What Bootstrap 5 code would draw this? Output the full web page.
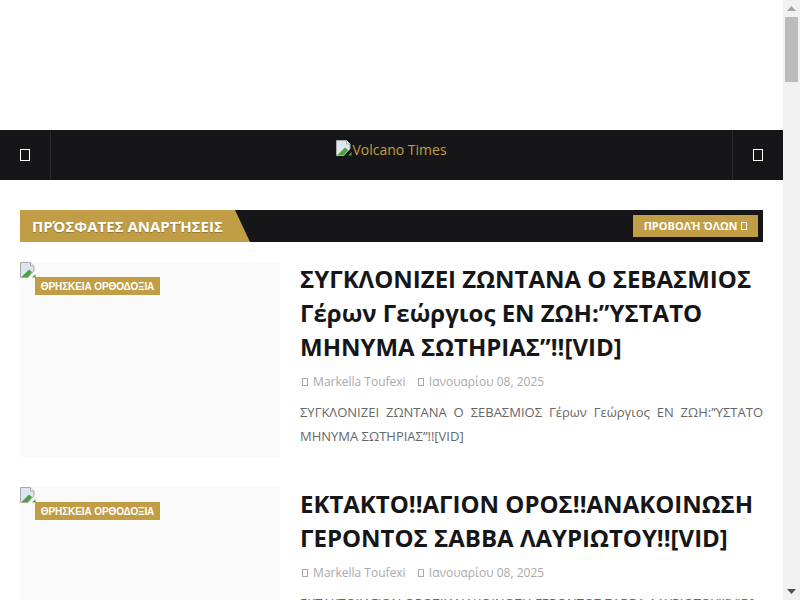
<!DOCTYPE html>
<html lang="el">
<head>
<meta charset="utf-8">
<title>Volcano Times</title>
<link href="https://cdn.jsdelivr.net/npm/bootstrap@5.3.0/dist/css/bootstrap.min.css" rel="stylesheet">
<style>
html, body { height: 100%; overflow: hidden; }
body { font-family: "Open Sans", sans-serif; color: #161619; background: #fff; }
.view-pane { min-width: 0; height: 600px; overflow: hidden; }
.fake-scroll { width: 17px; height: 600px; flex: none; background: #f1f1f1; }
.scroll-arrow { height: 17px; flex: none; }
.scroll-arrow svg { display: block; margin: 6px auto 0; }
.scroll-thumb { width: 13px; height: 65px; margin: 0 auto; background: #bcbcbc; }
.ad-space { height: 130px; }
.top-bar { height: 50px; background: #161619; }
.bar-btn { width: 51px; height: 50px; color: #fff; border-color: #2a2a2d !important; }
.tofu { display: inline-block; width: 10px; height: 12px; border: 1px solid currentColor; }
.brand-link { color: #c19d45; font-size: 14px; line-height: 19px; margin-top: 10px; text-decoration: none; }
.broken-ico { width: 16px; height: 16px; flex: none; vertical-align: top; }
.page-wrap { padding: 30px 20px 0; }
.sec-head { height: 32px; background: #161619; }
.sec-title { width: 230px; height: 32px; background: #c19d45; color: #fff; font-size: 15px; font-weight: 700; line-height: 32px; padding-left: 12px; white-space: nowrap; clip-path: polygon(0 0, 215px 0, 230px 100%, 0 100%); text-shadow: 0 1px 1px rgba(0,0,0,.25); }
.all-btn { width: 125px; height: 22px; margin-right: 5px; background: #c19d45; color: #fff; font-size: 11px; font-weight: 700; line-height: 22px; text-align: center; text-decoration: none; }
.all-btn .tofu { width: 6px; height: 8px; margin-left: 1px; }
.post-item { gap: 20px; margin-top: 20px; margin-bottom: 30px; }
.post-thumb { width: 260px; height: 195px; flex: none; background: #fafafa; }
.cat-tag { position: absolute; left: 15px; top: 15px; height: 18px; width: 125px; background: #c19d45; color: #fff; font-family: "Liberation Sans", sans-serif; font-size: 10px; font-weight: 700; line-height: 19px; letter-spacing: -.1px; text-align: center; }
.post-title { font-size: 24px; font-weight: 700; line-height: 34px; margin: 0 0 5px; color: #161619; }
.post-meta { font-size: 12px; line-height: 26px; color: #aaa; gap: 10px; }
.post-meta .tofu { width: 6px; height: 8px; margin: 0 2px; }
.post-desc { font-size: 13px; line-height: 24px; color: #666; text-align: justify; margin: 5px 0 0; }
</style>
</head>
<body class="d-flex">
<div class="view-pane flex-grow-1">
<div class="ad-space"></div>
<nav class="top-bar d-flex justify-content-between">
  <a class="bar-btn border-end d-flex align-items-center justify-content-center" href="#"><span class="tofu"></span></a>
  <a class="brand-link d-flex" href="#">
    <svg class="broken-ico" viewBox="0 0 16 16"><path d="M.5.500h10l3.500 3.500V9l-4 4-2 2.500H.5z" fill="#dbe6f5" stroke="#a9a9a9"/><path d="M10.500.500v3.500h3.500" fill="#fff" stroke="#a9a9a9"/><path d="M1.500 15L9 7.500l3 2.500-4 5z" fill="#4ea13f"/><path d="M12 15.500l3.500-3.500v3.500z" fill="#4ea13f"/></svg>Volcano Times</a>
  <a class="bar-btn border-start d-flex align-items-center justify-content-center" href="#"><span class="tofu"></span></a>
</nav>
<main class="page-wrap">
  <div class="sec-head d-flex justify-content-between align-items-center">
    <div class="sec-title">ΠΡΌΣΦΑΤΕΣ ΑΝΑΡΤΉΣΕΙΣ</div>
    <a class="all-btn" href="#">ΠΡΟΒΟΛΉ ΌΛΩΝ <span class="tofu"></span></a>
  </div>
  <article class="post-item d-flex">
    <div class="post-thumb position-relative">
      <svg class="broken-ico d-block" viewBox="0 0 16 16"><path d="M.5.500h10l3.500 3.500V9l-4 4-2 2.500H.5z" fill="#dbe6f5" stroke="#a9a9a9"/><path d="M10.500.500v3.500h3.500" fill="#fff" stroke="#a9a9a9"/><path d="M1.500 15L9 7.500l3 2.500-4 5z" fill="#4ea13f"/><path d="M12 15.500l3.500-3.500v3.500z" fill="#4ea13f"/></svg>
      <span class="cat-tag">ΘΡΗΣΚΕΙΑ ΟΡΘΟΔΟΞΙΑ</span>
    </div>
    <div class="flex-grow-1">
      <h2 class="post-title">ΣΥΓΚΛΟΝΙΖΕΙ ΖΩΝΤΑΝΑ Ο ΣΕΒΑΣΜΙΟΣ Γέρων Γεώργιος ΕΝ ΖΩΗ:”ΥΣΤΑΤΟ ΜΗΝΥΜΑ ΣΩΤΗΡΙΑΣ”!![VID]</h2>
      <div class="post-meta d-flex"><span><span class="tofu"></span> Markella Toufexi</span><span><span class="tofu"></span> Ιανουαρίου 08, 2025</span></div>
      <p class="post-desc">ΣΥΓΚΛΟΝΙΖΕΙ ΖΩΝΤΑΝΑ Ο ΣΕΒΑΣΜΙΟΣ Γέρων Γεώργιος ΕΝ ΖΩΗ:”ΥΣΤΑΤΟ ΜΗΝΥΜΑ ΣΩΤΗΡΙΑΣ”!![VID]</p>
    </div>
  </article>
  <article class="post-item d-flex">
    <div class="post-thumb position-relative">
      <svg class="broken-ico d-block" viewBox="0 0 16 16"><path d="M.5.500h10l3.500 3.500V9l-4 4-2 2.500H.5z" fill="#dbe6f5" stroke="#a9a9a9"/><path d="M10.500.500v3.500h3.500" fill="#fff" stroke="#a9a9a9"/><path d="M1.500 15L9 7.500l3 2.500-4 5z" fill="#4ea13f"/><path d="M12 15.500l3.500-3.500v3.500z" fill="#4ea13f"/></svg>
      <span class="cat-tag">ΘΡΗΣΚΕΙΑ ΟΡΘΟΔΟΞΙΑ</span>
    </div>
    <div class="flex-grow-1">
      <h2 class="post-title">ΕΚΤΑΚΤΟ!!ΑΓΙΟΝ ΟΡΟΣ!!ΑΝΑΚΟΙΝΩΣΗ ΓΕΡΟΝΤΟΣ ΣΑΒΒΑ ΛΑΥΡΙΩΤΟΥ!![VID]</h2>
      <div class="post-meta d-flex"><span><span class="tofu"></span> Markella Toufexi</span><span><span class="tofu"></span> Ιανουαρίου 08, 2025</span></div>
      <p class="post-desc">ΕΚΤΑΚΤΟ!!ΑΓΙΟΝ ΟΡΟΣ!!ΑΝΑΚΟΙΝΩΣΗ ΓΕΡΟΝΤΟΣ ΣΑΒΒΑ ΛΑΥΡΙΩΤΟΥ!![VID]</p>
    </div>
  </article>
</main>
</div>
<aside class="fake-scroll d-flex flex-column">
  <div class="scroll-arrow"><svg width="9" height="5" viewBox="0 0 9 5"><path d="M4.500 0L9 5H0z" fill="#a3a3a3"/></svg></div>
  <div class="scroll-thumb"></div>
  <div class="flex-grow-1"></div>
  <div class="scroll-arrow"><svg width="9" height="5" viewBox="0 0 9 5"><path d="M0 0h9L4.500 5z" fill="#505050"/></svg></div>
</aside>
<script src="https://cdn.jsdelivr.net/npm/bootstrap@5.3.0/dist/js/bootstrap.bundle.min.js"></script>
</body>
</html>
